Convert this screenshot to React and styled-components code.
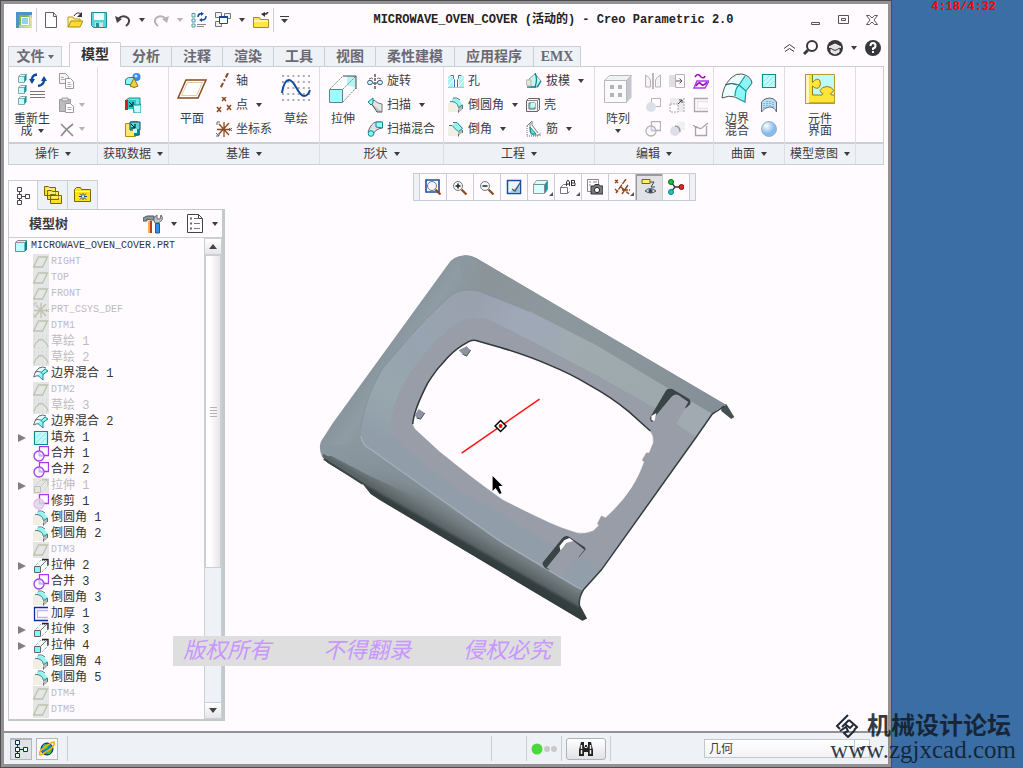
import React from "react";
import styled, { createGlobalStyle } from "styled-components";

const GlobalStyle = createGlobalStyle`
   * { box-sizing: border-box; }
   body {
      margin: 0;
      background: #3a6ea5;
      color: #3c3c40;
      font: 12px/12px "Liberation Sans", "Noto Sans CJK SC", sans-serif;
   }
   button, select { font: inherit; color: inherit; }
   button { padding: 0; border: 0; background: none; cursor: pointer; }
   svg { display: block; flex: none; }
`;

/* ---------- icons ---------- */

const Icon = ({ w = 16, h = w, box, children }) => (
   <svg width={w} height={h} viewBox={box || `0 0 ${w} ${h}`} fill="none" aria-hidden="true">
      {children}
   </svg>
);

const Caret = ({ color = "#3c3c40" }) => (
   <Icon w={6} h={4}><path d="M0 0h6L3 4z" fill={color} /></Icon>
);

const AppIcon = () => (
   <Icon>
      <path d="M0 0h16v16H0z" fill="#9bd0ea" /><path d="M0 0l16 0v3H3v13H0z" fill="#4f93c4" />
      <path d="M16 16V6l-2-2v10H4z" fill="#dfe78a" />
      <path d="M3 3h10v10H3z" fill="#7cba3c" /><path d="M5 5h8v8H5z" fill="#fff" /><path d="M6 6h6v6H6z" fill="#8fd4ef" />
   </Icon>
);
const NewIcon = () => (
   <Icon><path d="M2.500.500h8l3 3.500v11.500h-11z" fill="#fff" stroke="#606060" /><path d="M10.500.500v4h3" stroke="#606060" /></Icon>
);
const OpenIcon = () => (
   <Icon>
      <path d="M1 15V5h5l1 2h6v3" fill="#fff3a0" stroke="#b89b1c" /><path d="M1 15l3-6h12l-3 6z" fill="#ffd92e" stroke="#a98c10" />
      <path d="M7 4q3-5 7-2" stroke="#333" /><path d="M15 0v5h-5z" fill="#333" />
   </Icon>
);
const SaveIcon = () => (
   <Icon>
      <path d="M.500.500h15v15H2.500l-2-2z" fill="#55d6d6" stroke="#1b8b95" />
      <path d="M3 1h10v7H3z" fill="#f8f8ff" /><path d="M4 10.500h8V15H4z" fill="#d6e0e2" /><path d="M5 11h3v4H5z" fill="#23909b" />
   </Icon>
);
const UndoIcon = ({ color = "#444" }) => (
   <Icon><path d="M3 7q5-5 10-1 3 4-2 8" stroke={color} strokeWidth="2" /><path d="M0 4l2 7 5-4z" fill={color} /></Icon>
);
const RedoIcon = () => (
   <Icon><path d="M13 7q-5-5-10-1-3 4 2 8" stroke="#b4b4b4" strokeWidth="2" /><path d="M16 4l-2 7-5-4z" fill="#b4b4b4" /></Icon>
);
const RegenIcon = () => (
   <Icon>
      <path d="M1 1.500h3V5H1zM1 7h3v3H1zM1 12h3v3H1z" fill="#d6ffff" stroke="#5a9aa0" />
      <path d="M6 12.500h9M6 14.500h7" stroke="#888" />
      <path d="M7 5q0-3 3-3.500M15 4q0 4-4 4" stroke="#104a9c" strokeWidth="1.500" /><path d="M10 0v4l3-2.500zM11 6v4L8 8z" fill="#104a9c" />
   </Icon>
);
const WindowsIcon = () => (
   <Icon>
      <path d="M.500.500h6v5h-6zM9.500 1.500h6v5h-6zM.500 9.500h6v5h-6z" fill="#eef2f6" stroke="#777" />
      <path d="M4.500 4.500h8v7h-8z" fill="#fff" stroke="#104a9c" /><path d="M4 5h9" stroke="#104a9c" strokeWidth="2" />
   </Icon>
);
const CloseWinIcon = () => (
   <Icon>
      <path d="M.500 5.500h6l1 2h8v8H.500z" fill="#ffe64a" stroke="#a98c10" /><path d="M1 8h14v2H1z" fill="#fff6ae" />
      <path d="M15 0q-2 3-5 2" stroke="#333" strokeWidth="1.500" /><path d="M8 2l4-2v5z" fill="#333" />
   </Icon>
);

const RegenLarge = () => (
   <Icon w={30} h={32}>
      {[1, 12, 23].map((y) => (
         <g key={y}>
            <path d={`M1.500 ${y + 2.500}h6v6h-6z`} fill="#c6ffff" stroke="#8aa" />
            <path d={`M1.500 ${y + 2.500}l2-2h6l-2 2z`} fill="#e9ffff" stroke="#8aa" />
            <path d={`M7.500 ${y + 8}l2-2V${y}l-2 2z`} fill="#00999c" />
         </g>
      ))}
      <path d="M15 9q-1-7 5-7.500M27 5q1 7-6 8" stroke="#104a9c" strokeWidth="2.400" />
      <path d="M12 6h6l-3 5zM24 8l3-5 3 5z" fill="#104a9c" />
      <path d="M13 18.500h15M13 21.500h15M13 24.500h15" stroke="#777" />
   </Icon>
);
const CopyIcon = () => (
   <Icon>
      <path d="M.500 .500h6l3 3v7h-9z" fill="#f4f4f4" stroke="#9a9a9a" /><path d="M6.500 5.500h5l3 3v7h-8z" fill="#fff" stroke="#9a9a9a" />
      <path d="M2 4.500h3M2 6.500h4M8.500 9.500h3M8.500 11.500h4M8.500 13.500h4" stroke="#b0b0b0" />
   </Icon>
);
const PasteIcon = () => (
   <Icon>
      <path d="M.500 2.500h11v12h-11z" fill="#bdbdbd" stroke="#9a9a9a" /><path d="M3 1h6v3H3z" fill="#e4e4e4" stroke="#9a9a9a" />
      <path d="M6.500 6.500h5l3 3v6h-8z" fill="#fff" stroke="#9a9a9a" /><path d="M8.500 10.500h4M8.500 12.500h4" stroke="#b0b0b0" />
   </Icon>
);
const DeleteIcon = () => (
   <Icon><path d="M2 3l12 12M14 3Q7 8 2 15" stroke="#8c8c8c" strokeWidth="1.600" /></Icon>
);
const ShapesIcon = () => (
   <Icon>
      <circle cx="11.500" cy="4" r="4" fill="#3888e8" /><circle cx="11" cy="3" r="1.500" fill="#cbe6ff" />
      <path d="M.500 6.500l3-2h6v6l-3 1h-6z" fill="#8ff4f4" stroke="#158a90" />
      <path d="M9 5l4 8q-4 3-8 0z" fill="#ecd24a" stroke="#8a7410" />
   </Icon>
);
const MergeDataIcon = () => (
   <Icon>
      <path d="M1 3l3-2h11v11" fill="#66e8e8" stroke="#158a90" /><path d="M1 3h10v9H1z" fill="#22c8c8" /><path d="M0 3h3v10H0z" fill="#cc2222" />
      <path d="M4 5l4 4M8 5v4H4" stroke="#000" /><path d="M8 8h6l2-1v9H9z" fill="#c6ffff" stroke="#158a90" />
   </Icon>
);
const CopyGeomIcon = () => (
   <Icon>
      <path d="M.500 2.500h4l2-2h6v13l-2 2h-10z" fill="#ffe96b" stroke="#a98c10" />
      <path d="M5 1h10v8H5z" fill="#5cd6d6" stroke="#146" /><path d="M6 3l4 4M10 3v4H6" stroke="#000" />
      <path d="M9 9h6v5l-2 1H9z" fill="#0d8686" /><path d="M8 8h4v4H8z" fill="#bff" />
   </Icon>
);
const PlaneLarge = () => (
   <Icon w={30} h={20}>
      <path d="M9 1h20L21 19H1z" fill="#fff" stroke="#8b4a1c" strokeWidth="1.500" /><path d="M10.500 3.500h15l-6 13H4.500z" stroke="#d9cda6" />
   </Icon>
);
const AxisIcon = () => (
   <Icon><path d="M12 0L4 16" stroke="#8b4a1c" strokeWidth="2" strokeDasharray="5 2 2 2" /></Icon>
);
const PointIcon = () => (
   <Icon><path d="M6 0l4 4M10 0L6 4M1 10l4 5M5 10l-4 5M11 8l4 5M15 8l-4 5" stroke="#8b4a1c" strokeWidth="1.500" /></Icon>
);
const CsysIcon = ({ color = "#8b4a1c", tip = "#666" }) => (
   <Icon>
      <path d="M8 1v15M3 3l10 11M3 13L13 2M1 8.500h14" stroke={color} strokeWidth="1.300" />
      <path d="M1 4V1h3M0 12l3 3M0 15h3v-3M13 7l3 3M16 7l-3 3" stroke={tip} />
   </Icon>
);
const SketchLarge = () => (
   <Icon w={30} h={28}>
      {[1, 7, 13, 19, 25].map((y) => (
         <path key={y} d={`M1 ${y}h28`} stroke="#a8b0b8" strokeWidth="2" strokeDasharray="2 3.200" />
      ))}
      <path d="M1 18Q3 5 8 5c6 0 9 16 15 16q4 0 6-6" stroke="#104a9c" strokeWidth="2" />
   </Icon>
);
const ExtrudeLarge = () => (
   <Icon w={28} h={28}>
      <path d="M1 14L14 1h13v12L14 27z" fill="#f7fbfb" /><path d="M18 1h9v12l-9-3z" fill="#b6f3f3" />
      <path d="M1 14L14 1M14 14L27 1M14 27l13-14" stroke="#808890" strokeDasharray="2 1" />
      <path d="M14 1h13v13" stroke="#444" /><path d="M.500 14.500h13v13H.500z" fill="#99ffff" stroke="#6f7b80" />
   </Icon>
);
const RevolveIcon = () => (
   <Icon>
      <ellipse cx="3" cy="9.500" rx="2.500" ry="2.200" fill="#bff" stroke="#557" /><ellipse cx="13" cy="9.500" rx="2.500" ry="2.200" fill="#bff" stroke="#557" />
      <path d="M2 6q3-2 4 0M14 6q-3-2-4 0M5 8l2 3M11 8l-2 3" stroke="#666" /><path d="M8 1v15" stroke="#000" strokeDasharray="3 1" />
   </Icon>
);
const SweepIcon = () => (
   <Icon>
      <path d="M3 6L7 3l4 3 4 1v8l-5-2z" fill="#e4e6e8" stroke="#777" /><path d="M4 6l6 9h5" fill="#bfc4c6" stroke="#555" />
      <path d="M1 5l5-4v5l-2 2z" fill="#8ff" stroke="#0a8a8a" />
   </Icon>
);
const SweptBlendIcon = () => (
   <Icon>
      <path d="M1 11Q4 2 9 1h6v6q-7 1-9 7z" fill="#dde0e4" stroke="#667" /><path d="M9 1h6.500v6L9 6z" fill="#99ffff" stroke="#0a8a8a" />
      <circle cx="4" cy="12.500" r="2.800" fill="#7ff" stroke="#0a8a8a" />
   </Icon>
);
const HoleIcon = () => (
   <Icon>
      <path d="M0 3h3l2 2v9H0zM16 3h-3l-2 2v9h5z" fill="#a8f3f3" /><path d="M0 7l4-4M0 13l5-6M11 13l5-6M12 7l3-3" stroke="#fff" />
      <path d="M2.500 2.500h3v3l1 1v8h3v-8l1-1v-3h3" fill="#fff" stroke="#4a6fa8" /><path d="M0 14.500h16" stroke="#7dd" />
   </Icon>
);
const RoundIcon = () => (
   <Icon>
      <path d="M0 6l4-2q5 1 6 11H0z" fill="#f0efe4" /><path d="M10 10l4-2v5l-4 3z" fill="#b9b9b4" />
      <path d="M4 1.500Q12 1 14.500 8L10.500 10.500Q9 5 4 4.500z" fill="#8ff6f6" />
      <path d="M2 4.500Q9 4 10.500 10.500M5 1q4-1 7 2M14.500 8l-4 2.500M14.500 8v4M10.500 13v2.500" stroke="#4a7a7c" />
   </Icon>
);
const ChamferIcon = () => (
   <Icon>
      <path d="M0 6l4-2 6 6v5H0z" fill="#f0efe4" /><path d="M10 10l4-3v5l-4 3z" fill="#b9b9b4" />
      <path d="M4 4l5-3 6 6-5 4z" fill="#8ff6f6" />
      <path d="M1 4.500h3l6 6M5 1.500h4l5.500 6M14.500 7.500l-4 3M14.500 9v3M10.500 13v2.500" stroke="#4a7a7c" />
   </Icon>
);
const DraftIcon = () => (
   <Icon>
      <path d="M3 6l6-5 6 7-3 6H3z" fill="#c9f5f5" stroke="#8a9a9a" /><path d="M9 0q3 6 0 14M15 8l-4 6M1 14h9" stroke="#0a8a8a" strokeWidth="1.300" />
      <path d="M0 7h5v6H1z" fill="#e8e5da" stroke="#b9b7aa" />
   </Icon>
);
const ShellIcon = () => (
   <Icon w={14} h={14} box="0 0 14 14">
      <path d="M.500 2.500l2-2h11v11l-2 2H.500z" fill="#f3f5f6" stroke="#666" /><path d="M.500 2.500h11v11M11.500 2.500l2-2" stroke="#888" />
      <path d="M3 5h6v6H3z" fill="#8ee" stroke="#666" /><path d="M5 5h4v4H5z" fill="#cff" />
   </Icon>
);
const RibIcon = () => (
   <Icon>
      <path d="M4 2v9l3 3h8" stroke="#888" /><path d="M4 6l6 7H5z" fill="#5fe6e6" stroke="#0a8a8a" />
      <path d="M1 5v10h11l3-4" stroke="#666" strokeDasharray="1 1" /><path d="M1 5l5-5v4l6 8" stroke="#777" />
   </Icon>
);
const PatternLarge = () => (
   <Icon w={28} h={28}>
      <path d="M.500 5.500l5-5h22v22l-5 5" fill="#c6c6ce" /><path d="M.500 5.500l5-5h22l-5 5z" fill="#eef2f4" stroke="#b6babe" />
      <path d="M.500 5.500h22v22H.500z" fill="#fafafa" stroke="#b6babe" />
      <path d="M6 10h4v4H6zM14 10h4v4h-4zM6 18h4v4H6zM14 18h4v4h-4z" fill="#b4b4b8" />
   </Icon>
);
const MirrorIcon = () => (
   <Icon><path d="M8 0v16" stroke="#777" /><path d="M.500 2q4 2 5 5v7h-5zM15.500 2q-4 2-5 5v7h5z" fill="#f4f4f4" stroke="#b4b4b4" /></Icon>
);
const ExtendIcon = () => (
   <Icon><path d="M0 2h7v12H0z" fill="#dedee4" /><path d="M6.500 1.500h9v13h-9z" stroke="#b4b4b4" /><path d="M7 8h6M10.500 5.500L13 8l-2.500 2.500" stroke="#555" /></Icon>
);
const ProjectIcon = () => (
   <Icon>
      <path d="M2 4q3-5 6 0 3 2 4-1" stroke="#a000b8" strokeWidth="1.500" /><path d="M4 8h12l-4 7H1z" stroke="#a23cf0" strokeWidth="1.500" />
      <path d="M3 13q3-5 5-2t6-2" stroke="#a000b8" strokeWidth="1.500" />
   </Icon>
);
const TrimGrayIcon = () => (
   <Icon><path d="M6.500 1.500h9v8h-9z" stroke="#b4b4b4" /><circle cx="6" cy="10" r="5" fill="#dcdee8" /></Icon>
);
const OffsetIcon = () => (
   <Icon>
      <path d="M1 1h14v14H9V7H1z" fill="#ececf0" /><path d="M1 7h8v8H1zM15 1v14" stroke="#a8a8a8" strokeDasharray="2 1" />
      <path d="M9 7l4-4M10 3h3v3" stroke="#444" />
   </Icon>
);
const ThickenIcon = ({ color = "#a8a8a8", inner = "#e4e4ea" }) => (
   <Icon><path d="M15 1.500H1.500v13H15" stroke={color} strokeWidth="1.300" /><path d="M15 4.500H4.500v7H15" stroke={inner} strokeWidth="1.300" /></Icon>
);
const MergeIcon = ({ color = "#b4b4b4", fill = "none", ring = color }) => (
   <Icon>
      <path d="M6.500.500h9v9h-9z" stroke={color} strokeWidth="1.300" /><circle cx="6" cy="10" r="5" fill={fill} stroke={ring} strokeWidth="1.300" />
      <path d="M6.500 9.500V5.500M6.500 9.500h4" stroke="#c4c4ee" strokeWidth="1.300" />
   </Icon>
);
const IntersectIcon = () => (
   <Icon><path d="M8 1h8v8H8z" fill="#f0f0f4" /><circle cx="6" cy="10" r="5" fill="#dedee8" /><path d="M6 5q5 0 5 6" stroke="#999" strokeWidth="1.500" /></Icon>
);
const SolidifyIcon = () => (
   <Icon><path d="M2 6h2q4 3 6 0l5-4M2.500 6v8.500h11V5" stroke="#a8a8a8" strokeWidth="1.300" /><path d="M0 4l4 3" stroke="#888" /></Icon>
);
const BoundaryLarge = () => (
   <Icon w={32} h={32}>
      <path d="M1 25Q2 13 10 5q5-5 11-4 9 2 10 9l-6 7-1 12q-10-10-23-4z" fill="#eaffff" />
      <path d="M18 12l6-9q6 2 7 7l-6 7-1 12-11-7z" fill="#8ff6f6" />
      <path d="M1 25Q2 13 10 5q5-5 11-4 9 2 10 9M1 25q7-3 13-1" stroke="#555" />
      <path d="M4 12q7-3 14 0l7 6 6-8M18 12l6-9M14 23q0-7 4-11M14 24l10 5 1-12" stroke="#16989e" strokeWidth="1.200" />
      <path d="M4 12q7-3 12 0" stroke="#555" />
   </Icon>
);
const FillIcon = () => (
   <Icon><path d="M1.500 1.500h13v13h-13z" fill="#c2fbfb" stroke="#108c90" strokeWidth="1.200" /><path d="M3 8l5-5M3 13L13 3M8 13l5-5" stroke="#8be6e8" /></Icon>
);
const StyleIcon = () => (
   <Icon><path d="M.500 15V5q3-4 8-4t7 4v10q-2-5-7-5t-8 5z" fill="#b8def4" stroke="#667" /><path d="M3 6v5M6 4v5M9 4v5M12 5v6" stroke="#4a8cc0" strokeDasharray="1 1" /></Icon>
);
const SphereIcon = () => (
   <Icon>
      <defs><radialGradient id="sphere" cx=".35" cy=".3"><stop offset="0" stopColor="#fff" /><stop offset="1" stopColor="#86bcec" /></radialGradient></defs>
      <circle cx="8" cy="8" r="7.500" fill="url(#sphere)" stroke="#8fb4d8" />
   </Icon>
);
const PuzzleLarge = () => (
   <Icon w={30} h={30}>
      <path d="M0 0h30v30H0z" fill="#bdfbfb" />
      <path d="M.500.500h7v8q4-5 7-2.500 2 4 0 7-3 3-7-1v9h9.500l1-1.500q-3-1-3-3 2-4 7-4t6.500 4q-1 2.500-3 3l1 1.500h3v8H.500z" fill="#ffe53a" stroke="#9a7a12" />
      <path d="M1 1h3v28H1z" fill="#fff7b8" /><path d="M.500.500h29v29H.500z" stroke="#b89a32" />
   </Icon>
);
const CollapseIcon = () => (
   <Icon w={11} h={8}><path d="M0 4.500l5.500-4 5.500 4M1 7.500l4.500-3 4.500 3" stroke="#3c3c40" /></Icon>
);
const SearchIcon = () => (
   <Icon><circle cx="9" cy="6" r="5" stroke="#38383c" strokeWidth="2" /><path d="M5 10l-4 4" stroke="#38383c" strokeWidth="3" /></Icon>
);
const LearnIcon = () => (
   <Icon><circle cx="8" cy="8" r="8" fill="#38383c" /><path d="M2 7l6-3 6 3-6 3zM4 9v3l4 2 4-2V9" stroke="#fff" fill="#fff" fillOpacity=".85" /><path d="M3 8l5 2.500L13 8" stroke="#38383c" /></Icon>
);
const HelpIcon = () => (
   <Icon><circle cx="8" cy="8" r="8" fill="#38383c" /><path d="M5.500 6q0-3 2.500-3t2.500 2.500T8 8.500V10" stroke="#fff" strokeWidth="2" /><path d="M7 11h2v2H7z" fill="#fff" /></Icon>
);
const MinIcon = () => <Icon w={10} h={12}><path d="M.500 8.500h8v2h-8z" stroke="#555" /></Icon>;
const MaxIcon = () => <Icon w={11} h={10}><path d="M.500.500h10v8h-10zM3.500 3.500h4v2h-4z" stroke="#555" /></Icon>;
const XIcon = () => (
   <Icon w={12} h={10}><path d="M.500.500h3L6 3 8.500.500h3L8 5l3.500 4.500h-3L6 7 3.500 9.500h-3L4 5z" stroke="#555" /></Icon>
);

/* navigator icons */
const TreeIcon = ({ color = "#444" }) => (
   <Icon h={18}><path d="M2.500.500h4v4h-4zM2.500 7.500h4v4h-4zM2.500 13.500h4v4h-4zM10.500 7.500h4v4h-4zM4.500 5v2M4.500 12v1M7 9.500h3" fill="#fff" stroke={color} /></Icon>
);
const FoldersIcon = () => (
   <Icon w={18} h={18}>
      <g fill="#ffe21a" stroke="#75670e">
         <path d="M.500 2.500v-2h4l1 1h6v8h-11zM3.500 6.500v-2h4l1 1h6v8h-11zM6.500 10.500v-2h4l1 1h6v8h-11z" />
      </g>
      <path d="M8 11h9M5 7h9M2 3h9" stroke="#fffad0" />
   </Icon>
);
const FavoriteIcon = () => (
   <Icon w={18} h={16}>
      <path d="M.500 14.500v-12l2-2h4l1 2h9v12z" fill="#ffe21a" stroke="#75670e" /><path d="M1 4.500h15" stroke="#fffad0" />
      <path d="M9 6v7M5 9.500h8M6 6.500l6 6M12 6.500l-6 6" stroke="#104a9c" /><path d="M8 8.500h2v2H8z" fill="#fff" />
   </Icon>
);
const ToolsIcon = () => (
   <Icon w={20} h={20}>
      <path d="M0 7V4l4-2h7v4H7L4 5v2z" fill="#8f979b" stroke="#555" /><path d="M5 7h4v12H5z" fill="#ffb04a" /><path d="M7 7h2v12H7z" fill="#b8401c" />
      <path d="M12 9q-3-5 2-8v4h3l1-4q4 5-3 8z" fill="#c0c8cc" stroke="#666" /><path d="M12.500 9.500h4V19h-4z" fill="#3a8ee0" stroke="#1c5a9c" />
   </Icon>
);
const ListIcon = () => (
   <Icon w={17} h={20}>
      <path d="M.500.500h11l4 4v14H.500z" fill="#fff" stroke="#444" /><path d="M11.500.500v4h4" stroke="#444" />
      <path d="M3 4.500h2M3 9.500h2M3 14.500h2" stroke="#666" strokeWidth="2" /><path d="M7 4.500h4M7 9.500h6M7 14.500h6" stroke="#777" />
   </Icon>
);
const PartIcon = () => (
   <Icon><path d="M2.500 4.500l2-2h9v9l-2 2h-9z" fill="#bff" stroke="#888" /><path d="M11.500 4.500l2.500-2v9L11.500 14z" fill="#127f86" /><path d="M2.500 4.500h9" stroke="#999" /></Icon>
);
const PlaneTree = () => <Icon><path d="M5.500 3h9l-5 10h-9z" stroke="#bfc1ad" strokeWidth="1.300" /></Icon>;
const SketchTree = () => (
   <Icon>
      <path d="M1 2h15M1 5h15M1 14h15" stroke="#c4c7b9" strokeDasharray="1 3" /><path d="M1 13q1-4 4-6 3-3 6 0 3 2 4 6" stroke="#bfc1ad" strokeWidth="1.300" />
   </Icon>
);
const BlendTree = () => (
   <Icon>
      <path d="M.500 10Q2 5 6 2q4-2 7 0l2 3-5 3v6q-4-5-9.500-4z" fill="#e6ffff" />
      <path d="M8 7l4-4 3 2-5 4v5L5 9z" fill="#8ff4f4" />
      <path d="M.500 11Q2 5 6 2q4-2 7 0M1 11q3-2 5-1M2 6q3-1 6 0" stroke="#667" />
      <path d="M12 3l3 2-5 3.500V14L5.500 10M8 6.500L12 3M8 6.500l2 2" stroke="#108c90" />
   </Icon>
);
const ExtrudeTree = ({ muted }) => (
   <Icon>
      <path d="M1.500 8.500l6-6h7v6l-6 6" fill={muted ? "none" : "#f2fbfb"} stroke={muted ? "#c4c7b9" : "#888"} strokeDasharray="1 1" />
      <path d="M9 1.500h6v6" stroke={muted ? "#c4c7b9" : "#222"} strokeWidth="1.300" />
      <path d="M8 8l5-5" stroke={muted ? "#c4c7b9" : "#777"} />
      <path d="M1.500 8.500h6v6h-6z" fill={muted ? "none" : "#7ff"} stroke={muted ? "#bfc1ad" : "#666"} />
   </Icon>
);

/* graphics toolbar icons */
const Lens = ({ x = 7 }) => (
   <>
      <circle cx={x} cy="7" r="4.500" fill="#f2f8fc" stroke="#777" /><path d={`M${x + 3.500} 10.500l5 5`} stroke="#8b4a1c" strokeWidth="2.200" />
   </>
);
const RefitIcon = () => <Icon><path d="M1 1h13v12H1z" fill="#fff" stroke="#1a4fa0" strokeWidth="1.600" /><Lens x={7} /></Icon>;
const ZoomInIcon = () => <Icon><Lens x={6} /><path d="M3.500 7h5M6 4.500v5" stroke="#222" strokeWidth="1.500" /></Icon>;
const ZoomOutIcon = () => <Icon><Lens x={6} /><path d="M3.500 7h5" stroke="#222" strokeWidth="1.500" /></Icon>;
const RepaintIcon = () => (
   <Icon><path d="M1.500 1.500h13v13h-13z" fill="#eaf5fc" stroke="#1a4fa0" strokeWidth="1.500" /><path d="M2.500 14l6-4 5-6v10z" fill="#9cc8ea" /><path d="M6 10l3 2 5-8" stroke="#555" strokeWidth="1.300" /></Icon>
);
const DisplayIcon = () => (
   <Icon><path d="M.500 5.500l3-4h11v9l-3 4H.500z" fill="#d6ffff" stroke="#999" /><path d="M11.500 5.500l3-4v9l-3 4z" fill="#0fa0a4" /><path d="M.500 5.500h11v9" stroke="#888" /></Icon>
);
const ViewsIcon = () => (
   <Icon>
      <path d="M.500 8.500l3-3h4M.500 8.500h7v6h-7zM7.500 14.500l2-2" stroke="#777" fill="#fff" />
      <path d="M6.500 7V3l1.500-2 1.500 2v4M6.500 5h3M11.500 1v6M11.500 1.500h3V4h-3M11.500 6.500h3.500V4" stroke="#333" />
   </Icon>
);
const CameraIcon = () => (
   <Icon>
      <path d="M.500.500h11v12H.500z" fill="#fff" stroke="#888" /><path d="M2 3h2M2 6h2M6 3h4" stroke="#888" />
      <path d="M4 7h3l1-1.500h4L13 7h3v8H4z" fill="#7a7a7a" stroke="#333" /><circle cx="10" cy="11" r="2.600" fill="#fff" stroke="#222" />
   </Icon>
);
const DatumIcon = () => (
   <Icon><path d="M1 1l3 3M4 1L1 4M12 0L2 14M7 8l8 7M14 6l-6 9M8 11h8M1 10l3 3" stroke="#8b4a1c" strokeWidth="1.400" strokeDasharray="6 1" /></Icon>
);
const AnnotationIcon = () => (
   <Icon>
      <path d="M1 .500h8v4H1z" fill="#ffef6a" stroke="#75670e" /><path d="M9 3h4l-3 5h4" stroke="#444" />
      <path d="M4 12q5-5 11 0-5 4-11 0z" fill="#cfd8de" stroke="#455" /><circle cx="9.500" cy="12" r="2" fill="#346" />
   </Icon>
);
const SpinIcon = () => (
   <Icon>
      <path d="M3 3l4 5-4 5M7 8h7" stroke="#333" strokeWidth="1.300" />
      <circle cx="3" cy="3" r="2.500" fill="#0c3" stroke="#161" /><circle cx="3" cy="13" r="2.500" fill="#1cc" stroke="#177" /><circle cx="13.500" cy="8" r="2.500" fill="#e22" stroke="#711" />
   </Icon>
);
const GlobeIcon = () => (
   <Icon>
      <circle cx="8" cy="8" r="6" fill="#1a7ad0" stroke="#124" /><path d="M4 4q4-2 6 0l-2 4-4 1zM9 9l4-1-2 5H8z" fill="#3cc43c" />
      <path d="M1 14q-2-3 5-8t9-5q1 4-5 8t-9 5z" stroke="#e8b800" strokeWidth="1.600" />
   </Icon>
);
const BinocularsIcon = () => (
   <Icon w={18} h={16}>
      <path d="M4 1h3v4l1 2h2l1-2V1h3l2 8v6h-5v-4H7v4H2V9z" fill="#222" /><path d="M4.500 4v9M13.500 4v9" stroke="#eee" strokeWidth="1.500" strokeDasharray="4 1" /><path d="M8 4h2v2H8z" fill="#222" />
   </Icon>
);

const ForumLogo = () => (
   <Icon w={24} h={24}>
      <g stroke="#202a36" strokeWidth="2">
         <path d="M13 1L2 12l3 3M7 13l7-7M14 6l8 7-3 3M10 10l5 4 3-3" />
         <path d="M5 17l6-4 2 4-4 2 4 4 7-7" />
      </g>
   </Icon>
);

/* ---------- shaded part in the graphics window ---------- */

const Model = () => (
   <ModelSvg viewBox="225 201 664 530" role="img" aria-label="MICROWAVE_OVEN_COVER">
      <defs>
         <linearGradient id="slope" x1="380" y1="335" x2="420" y2="362" gradientUnits="userSpaceOnUse">
            <stop offset="0" stopColor="#84919a" /><stop offset=".6" stopColor="#8f9ca4" /><stop offset="1" stopColor="#899599" />
         </linearGradient>
         <linearGradient id="topSlope" x1="450" y1="270" x2="720" y2="405" gradientUnits="userSpaceOnUse">
            <stop offset="0" stopColor="#8c99a3" /><stop offset=".12" stopColor="#8b9499" /><stop offset=".4" stopColor="#8d989e" /><stop offset="1" stopColor="#848f97" />
         </linearGradient>
         <linearGradient id="bottomSlope" x1="516" y1="543" x2="500" y2="571" gradientUnits="userSpaceOnUse">
            <stop offset="0" stopColor="#818d94" /><stop offset=".35" stopColor="#727c80" /><stop offset=".7" stopColor="#596264" /><stop offset=".8" stopColor="#364041" /><stop offset="1" stopColor="#323c3d" />
         </linearGradient>
         <linearGradient id="cornerFacet" x1="335" y1="450" x2="425" y2="480" gradientUnits="userSpaceOnUse">
            <stop offset="0" stopColor="#8a979f" /><stop offset=".4" stopColor="#8a979f" stopOpacity=".8" /><stop offset="1" stopColor="#8a979f" stopOpacity="0" />
         </linearGradient>
         <linearGradient id="bevel" x1="470" y1="300" x2="380" y2="440" gradientUnits="userSpaceOnUse">
            <stop offset="0" stopColor="#9aa1ae" /><stop offset=".35" stopColor="#98a4b1" /><stop offset=".55" stopColor="#97a5af" /><stop offset=".75" stopColor="#98a7ae" /><stop offset="1" stopColor="#919eaa" />
         </linearGradient>
         <linearGradient id="topBevel" x1="480" y1="300" x2="700" y2="425" gradientUnits="userSpaceOnUse">
            <stop offset="0" stopColor="#9aa1ae" /><stop offset=".15" stopColor="#9fa8b7" /><stop offset=".32" stopColor="#9ea9b6" /><stop offset=".42" stopColor="#a0abb0" /><stop offset="1" stopColor="#9ca7ac" />
         </linearGradient>
      </defs>
      <path d="M722 406L727 404L735 417L732 419L722 411z" fill="#465053" />
      <path d="M447 266Q453 255 466 255Q472 255 477 258L727 405Q718 408 713 414L697 437L602 570L584 590Q579 598 580 606L587 619L583 621L380 500L371 494L363 484L328 463Q320 457 320 447Q320 442 324 437L333 423z" fill="url(#slope)" />
      <path d="M458 259Q462 255 466 255Q472 255 477 258L727 405Q718 408 713 414L665 386L597 345L530 311L480 291L467 290z" fill="url(#topSlope)" />
      <path d="M323 457L372 450L500 541L577 587L584 590Q579 598 580 606L587 619L583 621L380 500L371 494L363 484L328 463Q325 460 323 457z" fill="url(#bottomSlope)" />
      <path d="M320 448L363 441L372 450L430 491L420 499L370 476L326 453z" fill="url(#cornerFacet)" />
      <path d="M323 455L345 468L364 480L374 487" stroke="#5b6669" strokeWidth="3" fill="none" />
      <path d="M324 459L346 473L363 484" stroke="#3a4446" strokeWidth="2" fill="none" />
      <path d="M467 290Q456 290 448 298L427 318L407 340L383 368Q366 396 361 427Q361 436 363 442Q366 447 372 450L400 470L500 541L577 587L584 590L602 570L653 407L480 318L480 291z" fill="url(#bevel)" />
      <path d="M467 290Q474 289 480 291L530 311L597 345L665 386L713 414L697 437L653 407L600 377L530 340L490 320Q482 317 473 318z" fill="url(#topBevel)" />
      <path d="M410 453L458 490L500 513L543 540L602 570L584 590L577 587L500 541L400 470L372 450Q366 447 363 442L395 437z" fill="#929daa" />
      <path d="M361 436Q363 446 372 450L400 470L500 541L577 587L584 590" stroke="#a2adb8" strokeWidth="1.500" fill="none" />
      <path d="M361 427Q366 396 383 368L407 340L427 318L448 298Q456 290 467 290Q474 289 480 291L530 311" stroke="#8593a0" fill="none" />
      <path d="M473 318Q462 318 452 327L433 343L410 373Q396 395 392 415Q390 430 397 440Q402 447 410 453L458 490L500 513L543 540L602 570L697 437L653 407L600 377L530 340L490 320Q482 317 473 318z" fill="#989da8" />
      <path d="M697 437L677 424L691 401L713 414z" fill="#a0aab0" />
      <path d="M602 570L581 559L563 577L584 590z" fill="#929faa" />
      <path d="M725 406L713 414L697 437L602 570L584 590Q579 598 580 606L587 619" stroke="#353f41" strokeWidth="1.500" fill="none" />
      {/* window opening */}
      <path d="M470 341Q474 339 479 341L500 347Q530 356 550 365Q572 374 590 385Q612 397 630 412L651 431Q655 436 654 443L650 453L647 453L643 460L645 462Q640 476 633 487Q622 504 606 518L602 516L598 524L600 525L594 531Q585 535 577 533Q563 529 550 523Q526 512 503 500Q486 488 473 478Q456 465 440 452L415 429Q412 425 413 421Q415 410 428 383Q436 370 443 363Q453 351 463 345z" fill="#fffbff" stroke="#858c95" strokeWidth=".5" />
      <path d="M413 424Q414 410 428 383Q436 370 443 363Q453 351 463 345L470 341Q474 339 479 341L500 347Q530 356 550 365Q572 374 590 385Q612 397 630 412L651 431" stroke="#30393b" strokeWidth="1.500" fill="none" />
      <path d="M459 350L467 346L471 350L467 356L463 354z" fill="#8e949f" />
      <path d="M471 350L467 356L463 354" stroke="#495156" fill="none" />
      <path d="M415 415L419 409L425 413L421 419L417 418z" fill="#8e949f" />
      <path d="M425 413L421 419L417 418" stroke="#495156" fill="none" />
      {/* latch pockets */}
      <path d="M667 390Q669 388 673 389L690 399Q692 401 691 404L688 407L660 422L653 422Q650 421 651 417z" fill="#3a4446" />
      <path d="M672 397Q675 393 679 395L689 402L672 432L653 422L657 415z" fill="#989da8" />
      <path d="M652 420L652 416L657 413L655 421z" fill="#fffbff" />
      <path d="M563 538Q566 535 570 537L585 547Q587 549 585 551L580 557L549 570Q543 568 543 563z" fill="#3a4446" />
      <path d="M567 543Q570 540 574 541L585 550L563 577L547 568z" fill="#989da8" />
      <path d="M560 546L565 540L570 538L574 541L567 543L561 551z" fill="#fffbff" />
      <path d="M462 453l78-54" stroke="#f11" strokeWidth="1.500" />
      <path d="M501 420.500l5.500 5.500-5.500 5.500-5.500-5.500z" fill="#fff" stroke="#000" strokeWidth="1.500" /><circle cx="501" cy="426" r="2" fill="#f00" />
      <path d="M493 476v15l3-3 4 6 2-1-3-7h4z" fill="#000" />
   </ModelSvg>
);

/* ---------- layout ---------- */

const Desktop = styled.div`
   position: relative;
   display: grid;
   grid-template-columns: minmax(0, 1fr) 131px;
   min-height: 100vh;
`;
const Window = styled.div`
   display: flex;
   flex-direction: column;
   padding: 3px;
   border: 1px solid #4e4e50;
   background: #fffbff;
   box-shadow: inset 0 0 0 3px #929292;
`;
const Timer = styled.time`
   padding: 1px 27px 0 0;
   color: #f00;
   font: bold 12px/12px "Liberation Mono", monospace;
   text-align: right;
`;

const TitleBar = styled.header`
   display: flex;
   align-items: center;
   height: 32px;
   padding: 0 10px 0 12px;
`;
const QuickTools = styled.div`
   display: flex;
   align-items: center;
   gap: 8px;
   width: 280px;
`;
const QuickButton = styled.button`
   display: flex;
   align-items: center;
   gap: 8px;
`;
const Divider = styled.span`
   flex: none;
   align-self: stretch;
   min-height: 24px;
   width: 1px;
   margin: ${(p) => (p.$tight ? "0 -2px 0 -4px" : "3px 0")};
   background: #c9cfd2;
`;
const Title = styled.h1`
   flex: 1;
   margin: 0;
   color: #222;
   font: bold 12px/16px "Liberation Mono", "Noto Sans CJK SC", monospace;
   text-align: center;
   white-space: pre;
`;
const WindowButtons = styled.div`
   display: flex;
   align-items: center;
   gap: 17px;
`;

const TabBar = styled.nav`
   display: flex;
   align-items: flex-end;
   height: 30px;
   margin: 0 5px 0 4px;
`;
const Tab = styled.button`
   position: relative;
   display: flex;
   align-items: center;
   justify-content: center;
   gap: 3px;
   width: ${(p) => p.$width || 51}px;
   height: ${(p) => (p.$active ? 25 : 20)}px;
   margin-right: ${(p) => (p.$file ? "7px" : 0)};
   margin-bottom: ${(p) => (p.$active ? "-1px" : 0)};
   border: 1px solid #c9cfd2;
   border-width: 1px 1px 0 ${(p) => (p.$active || p.$file ? "1px" : 0)};
   border-radius: ${(p) => (p.$active ? "2px 2px 0 0" : 0)};
   background: ${(p) => (p.$active ? "#fffbff" : "#eef2f6")};
   color: ${(p) => (p.$active ? "#333" : "#6b6873")};
   font: bold 14px/16px "Liberation Serif", "Noto Sans CJK SC", serif;
`;
const HelpTools = styled.div`
   display: flex;
   align-items: center;
   align-self: flex-start;
   gap: 8px;
   height: 24px;
   margin-left: auto;
   margin-right: 2px;
`;

const Ribbon = styled.div`
   display: flex;
   height: 99px;
   margin: 0 4px;
   border: 1px solid #c9cfd2;
`;
const Group = styled.section`
   display: flex;
   flex: ${(p) => (p.$width ? `0 0 ${p.$width}px` : "1")};
   flex-direction: column;
   border-right: 1px solid #dcdfe2;
   &:last-child { border-right: 0; }
`;
const GroupBody = styled.div`
   display: flex;
   flex: 1;
   justify-content: ${(p) => p.$justify || "flex-start"};
   gap: ${(p) => p.$gap || 8}px;
   padding: 2px 4px 0;
`;
const GroupLabel = styled.button`
   display: flex;
   align-items: center;
   justify-content: center;
   gap: 6px;
   height: 22px;
   border-top: 2px solid #c9cfd2;
   background: #eef2f6;
   white-space: nowrap;
`;
const BigTool = styled.button`
   display: flex;
   flex-direction: column;
   align-items: center;
   width: ${(p) => p.$width || 38}px;
   height: 72px;
   padding-top: 4px;
   line-height: 12px;
`;
const BigPicture = styled.span`
   display: grid;
   place-items: center;
   height: 32px;
   margin-bottom: 8px;
`;
const WordRow = styled.span`
   display: flex;
   align-items: center;
   gap: 5px;
   min-height: 12px;
   white-space: nowrap;
`;
const Stack = styled.div`
   display: grid;
   grid-template-rows: repeat(3, 24px);
   align-content: start;
`;
const SmallTool = styled.button`
   display: flex;
   align-items: center;
   gap: 4px;
   white-space: nowrap;
`;
const ToolText = styled.span`
   margin-right: 4px;
`;

const Workspace = styled.main`
   display: flex;
   flex: 1;
   min-height: 0;
   padding-top: 8px;
`;
const Navigator = styled.aside`
   display: flex;
   flex-direction: column;
   width: 217px;
   margin: 7px 0 10px 4px;
`;
const NavTabs = styled.div`
   display: flex;
   height: 29px;
`;
const NavTab = styled.button`
   display: grid;
   place-items: center;
   width: 30px;
   height: ${(p) => (p.$active ? 30 : 29)}px;
   border: 1px solid #c9cfd2;
   border-width: 1px 1px 0 ${(p) => (p.$active ? "1px" : 0)};
   background: ${(p) => (p.$active ? "#fffbff" : "#eef2f6")};
   z-index: 1;
`;
const Panel = styled.div`
   display: flex;
   flex: 1;
   flex-direction: column;
   border: 1px solid #c3cacc;
   border-width: 1px 3px 2px 1px;
`;
const PanelHead = styled.div`
   display: flex;
   align-items: center;
   gap: 10px;
   height: 28px;
   padding: 0 4px 0 20px;
   border-bottom: 1px solid #c9cfd2;
`;
const PanelTitle = styled.h2`
   flex: 1;
   margin: 0;
   font-size: 13px;
   line-height: 16px;
`;
const TreeArea = styled.div`
   display: flex;
   flex: 1;
   min-height: 0;
`;
const TreeList = styled.ul`
   flex: 1;
   margin: 0;
   padding: 0;
   list-style: none;
`;
const TreeRow = styled.li`
   display: flex;
   align-items: center;
   gap: 2px;
   height: 16px;
   padding-left: ${(p) => (p.$root ? 4 : 9)}px;
   color: ${(p) => (p.$muted ? "#bcbcbe" : "#333")};
   font: ${(p) => (p.$latin ? "10px" : "12px")}/16px "Liberation Mono", "Noto Sans CJK SC", monospace;
   white-space: pre;
`;
const Twisty = styled.button`
   width: 13px;
   height: 16px;
`;
const RowIcon = styled.span`
   background: ${(p) => (p.$muted ? "#e4e6e6" : "none")};
`;
const ScrollTrack = styled.div`
   display: flex;
   flex-direction: column;
   width: 18px;
   border: 1px solid #c9cfd2;
   border-width: 0 1px;
   background: #eef2f6;
`;
const ScrollButton = styled.button`
   display: grid;
   place-items: center;
   height: 17px;
   border: 1px solid #c9cfd2;
   border-width: 1px 0;
   background: linear-gradient(#fff, #e6e6ea);
`;
const Thumb = styled.div`
   display: grid;
   flex: 0 0 65%;
   place-items: center;
   border: 1px solid #c9cfd2;
   background: linear-gradient(90deg, #fff 30%, #e6e4e8);
`;
const ScrollGap = styled.div`
   flex: 1;
`;

const Viewport = styled.section`
   display: flex;
   flex: 1;
   flex-direction: column;
   align-items: center;
   min-width: 0;
`;
const ViewTools = styled.div`
   display: flex;
   height: 28px;
   margin-right: 4px;
   padding: 0 5px;
   border: 1px solid #c8ccd6;
   background: #eef2f6;
`;
const ViewTool = styled.button`
   display: flex;
   align-items: center;
   justify-content: center;
   width: 27px;
   border-left: 1px solid #c8ccd6;
   background: ${(p) => (p.$pressed ? "#e0e2e6" : "#fffbff")};
   box-shadow: ${(p) => (p.$pressed ? "inset 1px 2px 0 #9a9a9e" : "none")};
   &:last-child { width: 28px; border-right: 1px solid #c8ccd6; }
`;
const Corner = styled.i`
   align-self: flex-end;
   margin: 0 -3px 4px 0;
   border: 2px solid #555;
   border-top-color: transparent;
   border-left-color: transparent;
`;
const ModelSvg = styled.svg`
   flex: 1 1 0;
   width: 100%;
   min-height: 0;
`;

const StatusBar = styled.footer`
   display: flex;
   align-items: center;
   gap: 4px;
   height: 33px;
   padding: 0 18px 0 6px;
   border-top: 2px solid #929292;
   background: #eef2f6;
`;
const StatusToggle = styled.button`
   display: grid;
   place-items: center;
   width: 22px;
   height: 22px;
   border: 1px solid #b4b8bc;
   background: ${(p) => (p.$pressed ? "#dfe2e6" : "#f7f8fa")};
   border-top-width: ${(p) => (p.$pressed ? "2px" : "1px")};
`;
const StatusSpace = styled.span`
   flex: ${(p) => (p.$width ? `0 0 ${p.$width}px` : "1")};
`;
const FindButton = styled.button`
   display: grid;
   place-items: center;
   width: 40px;
   height: 22px;
   border: 1px solid #aeb2b6;
   border-radius: 3px;
   background: linear-gradient(#fff, #e2e2e6);
`;
const FilterBox = styled.label`
   display: flex;
   align-items: center;
   width: 166px;
   height: 19px;
   border: 1px solid #c3c8cc;
   background: linear-gradient(#fff, #f4f2f6);
`;
const FilterSelect = styled.select`
   flex: 1;
   height: 17px;
   padding: 0 4px;
   border: 0;
   border-right: 1px solid #c3c8cc;
   background: none;
   appearance: none;
`;
const FilterArrow = styled.span`
   padding: 0 4px;
`;

const Notice = styled.p`
   position: absolute;
   left: 173px;
   bottom: 102px;
   display: flex;
   justify-content: space-between;
   width: 388px;
   height: 30px;
   margin: 0;
   padding: 0 10px;
   background: #dedede;
   color: #c896ff;
   font-size: 22px;
   font-style: italic;
   line-height: 30px;
`;
const Forum = styled.div`
   position: absolute;
   right: 7px;
   bottom: 6px;
   color: rgba(16, 24, 36, 0.85);
`;
const ForumName = styled.div`
   display: flex;
   align-items: center;
   justify-content: space-between;
   padding: 0 5px;
   font-size: 24px;
   font-weight: bold;
   line-height: 24px;
`;
const ForumUrl = styled.a`
   display: block;
   color: inherit;
   font: 25px/24px "Liberation Serif", serif;
   text-decoration: none;
`;

/* ---------- data ---------- */

const tabs = [
   ["分析"], ["注释"], ["渲染"], ["工具"], ["视图"], ["柔性建模", 79], ["应用程序", 79], ["EMX", 47],
];

const plane = { icon: <PlaneTree />, muted: true, latin: true };
const sketch = { icon: <SketchTree />, muted: true };
const merge = <MergeIcon color="#a23cf0" />;
const tree = [
   { ...plane, name: "RIGHT" },
   { ...plane, name: "TOP" },
   { ...plane, name: "FRONT" },
   { icon: <CsysIcon color="#bfc1ad" tip="#bfc1ad" />, muted: true, latin: true, name: "PRT_CSYS_DEF" },
   { ...plane, name: "DTM1" },
   { ...sketch, name: "草绘 1" },
   { ...sketch, name: "草绘 2" },
   { icon: <BlendTree />, name: "边界混合 1" },
   { ...plane, name: "DTM2" },
   { ...sketch, name: "草绘 3" },
   { icon: <BlendTree />, name: "边界混合 2" },
   { icon: <FillIcon />, name: "填充 1", open: true },
   { icon: merge, name: "合并 1" },
   { icon: merge, name: "合并 2" },
   { icon: <ExtrudeTree muted />, name: "拉伸 1", muted: true, open: true },
   { icon: <MergeIcon color="#a23cf0" fill="#dedee6" ring="#f0b4f0" />, name: "修剪 1" },
   { icon: <RoundIcon />, name: "倒圆角 1" },
   { icon: <RoundIcon />, name: "倒圆角 2" },
   { ...plane, name: "DTM3" },
   { icon: <ExtrudeTree />, name: "拉伸 2", open: true },
   { icon: merge, name: "合并 3" },
   { icon: <RoundIcon />, name: "倒圆角 3" },
   { icon: <ThickenIcon color="#0a3292" inner="#b9b9f2" />, name: "加厚 1" },
   { icon: <ExtrudeTree />, name: "拉伸 3", open: true },
   { icon: <ExtrudeTree />, name: "拉伸 4", open: true },
   { icon: <RoundIcon />, name: "倒圆角 4" },
   { icon: <RoundIcon />, name: "倒圆角 5" },
   { ...plane, name: "DTM4" },
   { ...plane, name: "DTM5" },
];

const viewTools = [
   ["重新调整", <RefitIcon />], ["放大", <ZoomInIcon />], ["缩小", <ZoomOutIcon />], ["重画", <RepaintIcon />],
   ["显示样式", <DisplayIcon />, true], ["已保存方向", <ViewsIcon />, true], ["视图管理器", <CameraIcon />],
   ["基准显示过滤器", <DatumIcon />, true], ["注释显示", <AnnotationIcon />], ["旋转中心", <SpinIcon />],
];

/* ---------- parts ---------- */

const Tool = ({ icon, text, menu, label, off }) => (
   <SmallTool aria-label={label}>
      {icon}
      {text && <ToolText>{text}</ToolText>}
      {menu && <Caret color={off ? "#b4b4b4" : undefined} />}
   </SmallTool>
);

const Big = ({ icon, lines, menu, width }) => (
   <BigTool $width={width}>
      <BigPicture>{icon}</BigPicture>
      {lines.map((line, i) => (
         <WordRow key={i}>
            {line}
            {menu && i === lines.length - 1 && <Caret />}
         </WordRow>
      ))}
   </BigTool>
);

const RibbonGroup = ({ name, width, gap, justify, children }) => (
   <Group $width={width}>
      <GroupBody $gap={gap} $justify={justify}>{children}</GroupBody>
      <GroupLabel>{name}<Caret /></GroupLabel>
   </Group>
);

const RibbonGroups = () => (
   <Ribbon>
      <RibbonGroup name="操作" width={89}>
         <Big icon={<RegenLarge />} lines={["重新生", "成"]} menu />
         <Stack>
            <Tool icon={<CopyIcon />} label="复制" />
            <Tool icon={<PasteIcon />} label="粘贴" menu off />
            <Tool icon={<DeleteIcon />} label="删除" menu off />
         </Stack>
      </RibbonGroup>
      <RibbonGroup name="获取数据" width={71} justify="center">
         <Stack>
            <Tool icon={<ShapesIcon />} label="用户定义特征" />
            <Tool icon={<MergeDataIcon />} label="合并/继承" />
            <Tool icon={<CopyGeomIcon />} label="复制几何" />
         </Stack>
      </RibbonGroup>
      <RibbonGroup name="基准" width={151} gap={5}>
         <Big icon={<PlaneLarge />} lines={["平面"]} />
         <Stack>
            <Tool icon={<AxisIcon />} text="轴" />
            <Tool icon={<PointIcon />} text="点" menu />
            <Tool icon={<CsysIcon />} text="坐标系" />
         </Stack>
         <Big icon={<SketchLarge />} lines={["草绘"]} width={30} />
      </RibbonGroup>
      <RibbonGroup name="形状" width={123} gap={5}>
         <Big icon={<ExtrudeLarge />} lines={["拉伸"]} />
         <Stack>
            <Tool icon={<RevolveIcon />} text="旋转" />
            <Tool icon={<SweepIcon />} text="扫描" menu />
            <Tool icon={<SweptBlendIcon />} text="扫描混合" />
         </Stack>
      </RibbonGroup>
      <RibbonGroup name="工程" width={151} gap={8}>
         <Stack>
            <Tool icon={<HoleIcon />} text="孔" />
            <Tool icon={<RoundIcon />} text="倒圆角" menu />
            <Tool icon={<ChamferIcon />} text="倒角" menu />
         </Stack>
         <Stack>
            <Tool icon={<DraftIcon />} text="拔模" menu />
            <Tool icon={<ShellIcon />} text="壳" />
            <Tool icon={<RibIcon />} text="筋" menu />
         </Stack>
      </RibbonGroup>
      <RibbonGroup name="编辑" width={119}>
         <Big icon={<PatternLarge />} lines={["阵列", ""]} menu />
         <Stack>
            <Tool icon={<MirrorIcon />} label="镜像" />
            <Tool icon={<TrimGrayIcon />} label="修剪" />
            <Tool icon={<MergeIcon />} label="合并" />
         </Stack>
         <Stack>
            <Tool icon={<ExtendIcon />} label="延伸" />
            <Tool icon={<OffsetIcon />} label="偏移" />
            <Tool icon={<IntersectIcon />} label="相交" />
         </Stack>
         <Stack>
            <Tool icon={<ProjectIcon />} label="投影" />
            <Tool icon={<ThickenIcon />} label="加厚" />
            <Tool icon={<SolidifyIcon />} label="实体化" />
         </Stack>
      </RibbonGroup>
      <RibbonGroup name="曲面" width={71} gap={5}>
         <Big icon={<BoundaryLarge />} lines={["边界", "混合"]} />
         <Stack>
            <Tool icon={<FillIcon />} label="填充" />
            <Tool icon={<StyleIcon />} label="样式" />
            <Tool icon={<SphereIcon />} label="自由式" />
         </Stack>
      </RibbonGroup>
      <RibbonGroup name="模型意图" width={71} justify="center">
         <Big icon={<PuzzleLarge />} lines={["元件", "界面"]} />
      </RibbonGroup>
      <Group>
         <GroupBody />
         <GroupLabel as="div" />
      </Group>
   </Ribbon>
);

const ModelTree = () => (
   <Navigator>
      <NavTabs>
         <NavTab $active aria-label="模型树"><TreeIcon /></NavTab>
         <NavTab aria-label="文件夹浏览器"><FoldersIcon /></NavTab>
         <NavTab aria-label="收藏夹"><FavoriteIcon /></NavTab>
      </NavTabs>
      <Panel>
         <PanelHead>
            <PanelTitle>模型树</PanelTitle>
            <QuickButton aria-label="设置"><ToolsIcon /><Caret /></QuickButton>
            <QuickButton aria-label="显示"><ListIcon /><Caret /></QuickButton>
         </PanelHead>
         <TreeArea>
            <TreeList>
               <TreeRow $root $latin><RowIcon><PartIcon /></RowIcon>MICROWAVE_OVEN_COVER.PRT</TreeRow>
               {tree.map((row) => (
                  <TreeRow key={row.name} $muted={row.muted} $latin={row.latin}>
                     <Twisty as={row.open ? "button" : "span"} aria-label={row.open ? `展开 ${row.name}` : undefined}>
                        {row.open && <Icon w={8} h={10}><path d="M0 1l8 4-8 4z" fill="#808080" /></Icon>}
                     </Twisty>
                     <RowIcon $muted={row.muted}>{row.icon}</RowIcon>
                     {row.name}
                  </TreeRow>
               ))}
            </TreeList>
            <ScrollTrack>
               <ScrollButton aria-label="向上滚动"><Icon w={8} h={5}><path d="M0 5l4-5 4 5z" fill="#444" /></Icon></ScrollButton>
               <Thumb><Icon w={7} h={11}><path d="M0 1.500h7M0 4.500h7M0 7.500h7M0 10.500h7" stroke="#b4b4b8" /></Icon></Thumb>
               <ScrollGap />
               <ScrollButton aria-label="向下滚动"><Icon w={8} h={5}><path d="M0 0l4 5 4-5z" fill="#444" /></Icon></ScrollButton>
            </ScrollTrack>
         </TreeArea>
      </Panel>
   </Navigator>
);

const App = () => {
   return (
      <Desktop>
         <GlobalStyle />
         <Window>
            <TitleBar>
               <QuickTools>
                  <QuickButton aria-label="Creo"><AppIcon /></QuickButton>
                  <Divider $tight />
                  <QuickButton aria-label="新建"><NewIcon /></QuickButton>
                  <QuickButton aria-label="打开"><OpenIcon /></QuickButton>
                  <QuickButton aria-label="保存"><SaveIcon /></QuickButton>
                  <QuickButton aria-label="撤消"><UndoIcon /><Caret /></QuickButton>
                  <QuickButton aria-label="重做"><RedoIcon /><Caret color="#b4b4b4" /></QuickButton>
                  <QuickButton aria-label="重新生成"><RegenIcon /></QuickButton>
                  <QuickButton aria-label="窗口"><WindowsIcon /><Caret /></QuickButton>
                  <QuickButton aria-label="关闭窗口"><CloseWinIcon /></QuickButton>
                  <Divider $tight />
                  <QuickButton aria-label="自定义快速访问工具栏">
                     <Icon w={9} h={8}><path d="M0 .500h9" stroke="#3c3c40" /><path d="M1 3h7l-3.500 4z" fill="#3c3c40" /></Icon>
                  </QuickButton>
               </QuickTools>
               <Title>MICROWAVE_OVEN_COVER (活动的) - Creo Parametric 2.0</Title>
               <WindowButtons>
                  <button aria-label="最小化"><MinIcon /></button>
                  <button aria-label="最大化"><MaxIcon /></button>
                  <button aria-label="关闭"><XIcon /></button>
               </WindowButtons>
            </TitleBar>

            <TabBar>
               <Tab $file $width={54}>文件<Caret color="#6b6873" /></Tab>
               <Tab $active $width={52}>模型</Tab>
               {tabs.map(([name, width]) => (
                  <Tab key={name} $width={width}>{name}</Tab>
               ))}
               <HelpTools>
                  <button aria-label="最小化功能区"><CollapseIcon /></button>
                  <button aria-label="搜索"><SearchIcon /></button>
                  <QuickButton aria-label="学习"><LearnIcon /><Caret /></QuickButton>
                  <button aria-label="帮助"><HelpIcon /></button>
               </HelpTools>
            </TabBar>
            <RibbonGroups />

            <Workspace>
               <ModelTree />
               <Viewport>
                  <ViewTools>
                     {viewTools.map(([label, icon, menu]) => (
                        <ViewTool key={label} aria-label={label} $pressed={label === "注释显示"}>
                           {icon}
                           {menu && <Corner />}
                        </ViewTool>
                     ))}
                  </ViewTools>
                  <Model />
               </Viewport>
            </Workspace>

            <StatusBar>
               <StatusToggle $pressed aria-label="显示导航器"><TreeIcon color="#0a2a6a" /></StatusToggle>
               <StatusToggle aria-label="显示浏览器"><GlobeIcon /></StatusToggle>
               <StatusSpace $width={1} />
               <Divider />
               <StatusSpace />
               <Divider />
               <StatusSpace $width={26} />
               <Divider />
               <Icon w={26} h={12}>
                  <circle cx="6" cy="6" r="5.500" fill="#4bd83c" /><circle cx="16" cy="6" r="3" fill="#c9c9c9" /><circle cx="23" cy="6" r="3" fill="#c9c9c9" />
               </Icon>
               <Divider />
               <FindButton aria-label="查找"><BinocularsIcon /></FindButton>
               <Divider />
               <StatusSpace $width={85} />
               <FilterBox>
                  <FilterSelect aria-label="选择过滤器"><option>几何</option></FilterSelect>
                  <FilterArrow><Caret /></FilterArrow>
               </FilterBox>
            </StatusBar>
         </Window>
         <Timer>4:18/4:32</Timer>
         <Notice><span>版权所有</span><span>不得翻录</span><span>侵权必究</span></Notice>
         <Forum>
            <ForumName><ForumLogo />机械设计论坛</ForumName>
            <ForumUrl href="#forum">www.zgjxcad.com</ForumUrl>
         </Forum>
      </Desktop>
   );
};

export default App;
